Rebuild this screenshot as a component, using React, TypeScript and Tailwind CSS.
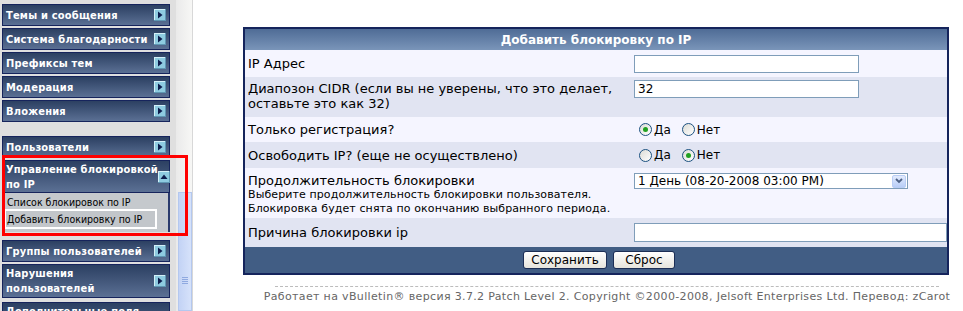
import type { ReactNode } from "react";

const SANS = "font-['DejaVu_Sans',Verdana,sans-serif]";
const COND = "font-['DejaVu_Sans_Condensed','DejaVu_Sans',Tahoma,sans-serif]";

function Arrow({ up }: { up?: boolean }) {
  return (
    <svg width="12" height="12" viewBox="0 0 12 12" className="shrink-0">
      <rect x="0" y="0" width="12" height="12" fill="#5f97b3" />
      <rect x="0" y="0" width="11" height="11" fill="#d3f0f8" />
      <rect x="1" y="1" width="10" height="10" fill="#8ecbe0" />
      {up ? (
        <path d="M2.5 8 L6 3.5 L9.5 8 Z" fill="#0d1d4d" />
      ) : (
        <path d="M4 2.5 L8.5 6 L4 9.5 Z" fill="#0d1d4d" />
      )}
    </svg>
  );
}

function NavItem({
  children,
  up,
  h = "h-[22px]",
  className = "",
}: {
  children: ReactNode;
  up?: boolean;
  h?: string;
  className?: string;
}) {
  return (
    <div
      className={`${h} ${className} flex w-[168px] shrink-0 items-center justify-between border border-[#16245c] bg-gradient-to-b from-[#2c4062] to-[#5b7094] pl-[3px] pr-[3px] text-[11px] font-bold leading-[15px] tracking-[0.2px] text-white ${COND}`}
    >
      <span className="whitespace-nowrap">{children}</span>
      <Arrow up={up} />
    </div>
  );
}

function Radio({ checked }: { checked?: boolean }) {
  return (
    <span className="flex h-[13px] w-[13px] items-center justify-center rounded-full border border-[#1c5180] bg-gradient-to-br from-[#dcdcd6] to-white">
      {checked && <span className="h-[5px] w-[5px] rounded-full bg-[#21a121]" />}
    </span>
  );
}

function Row({
  bg,
  h,
  top,
  label,
  children,
}: {
  bg: string;
  h: string;
  top?: boolean;
  label: ReactNode;
  children: ReactNode;
}) {
  return (
    <div
      className={`grid grid-cols-[387px_1fr] ${bg} ${h} ${top ? "items-start" : "items-center"}`}
    >
      <div className={`pl-[3px] text-[13px] leading-[15px] text-black ${top ? "pt-[4px]" : ""}`}>
        {label}
      </div>
      <div className={`pl-[2px] ${top ? "pt-[3px]" : ""}`}>{children}</div>
    </div>
  );
}

const inputCls = "block h-[18px] border border-[#7f9db9] bg-white px-[3px] text-[12px] leading-[16px]";

export default function App() {
  return (
    <div className={`relative flex h-[311px] w-[963px] overflow-hidden bg-white ${SANS}`}>
      {/* Боковое меню */}
      <div className="flex w-[176px] flex-col gap-[2px] bg-[#dfdfdf] pl-[2px] pt-[4px]">
        <NavItem>Темы и сообщения</NavItem>
        <NavItem>Система благодарности</NavItem>
        <NavItem>Префиксы тем</NavItem>
        <NavItem>Модерация</NavItem>
        <NavItem>Вложения</NavItem>
        <NavItem className="mt-[12px]">Пользователи</NavItem>
        <div className="shrink-0">
          <NavItem up h="h-[33px]">
            Управление блокировкой
            <br />
            по IP
          </NavItem>
          <div className={`w-[168px] border-r-2 border-[#2a3a6c] bg-[#c5c9cd] pb-[3px] pl-[2px] pt-[2px] text-[10.5px] text-black ${COND}`}>
            <div className="h-[14px] whitespace-nowrap pl-[3px] leading-[14px]">Список блокировок по IP</div>
            <div className="w-[153px] whitespace-nowrap border-2 border-white bg-[#c2c6ca] pl-[1px] leading-[16px]">
              Добавить блокировку по IP
            </div>
          </div>
        </div>
        <NavItem className="mt-[6px]">Группы пользователей</NavItem>
        <NavItem h="h-[34px]">
          Нарушения
          <br />
          пользователей
        </NavItem>
        <NavItem h="h-[34px]" className="mt-[2px]">
          Дополнительные поля
          <br />
          пользователей
        </NavItem>
      </div>

      {/* Полоса прокрутки */}
      <div className="flex w-[17px] flex-col border-r border-[#d8d8d8] bg-gradient-to-r from-[#eaeaea] to-[#f7f7f5]">
        <div className="h-[192px] shrink-0" />
        <div className="ml-[2px] flex flex-1 flex-col items-center border border-[#b4c8ef] bg-gradient-to-r from-[#c3d3f5] to-[#d6e2fa] pt-[84px]">
          <div className="flex flex-col gap-[1px]">
            <div className="h-[1px] w-[6px] bg-[#8fa9e0]" />
            <div className="h-[1px] w-[6px] bg-[#8fa9e0]" />
            <div className="h-[1px] w-[6px] bg-[#8fa9e0]" />
            <div className="h-[1px] w-[6px] bg-[#8fa9e0]" />
          </div>
        </div>
      </div>

      {/* Основная область */}
      <div className="flex-1 pl-[50px] pt-[27px]">
        <div className="w-[706px] border-2 border-[#15245c]">
          <div className="flex h-[21px] items-center justify-center bg-gradient-to-b from-[#4f6c96] to-[#7a95b9] text-[12px] font-bold text-white">
            Добавить блокировку по IP
          </div>
          <Row bg="bg-[#f5f5ff]" h="h-[27px]" label="IP Адрес">
            <div className={`${inputCls} w-[225px]`} />
          </Row>
          <Row
            bg="bg-[#e1e4f2]"
            h="h-[40px]"
            top
            label={
              <>
                Диапозон CIDR (если вы не уверены, что это делает,
                <br />
                оставьте это как 32)
              </>
            }
          >
            <div className={`${inputCls} w-[225px]`}>32</div>
          </Row>
          <Row bg="bg-[#f5f5ff]" h="h-[25px]" label="Только регистрация?">
            <div className="flex items-center pl-[5px] text-[12px]">
              <Radio checked />
              <span className="ml-[2px]">Да</span>
              <span className="ml-[11px]" />
              <Radio />
              <span className="ml-[2px]">Нет</span>
            </div>
          </Row>
          <Row bg="bg-[#e1e4f2]" h="h-[26px]" label="Освободить IP? (еще не осуществлено)">
            <div className="flex items-center pl-[5px] text-[12px]">
              <Radio />
              <span className="ml-[2px]">Да</span>
              <span className="ml-[11px]" />
              <Radio checked />
              <span className="ml-[2px]">Нет</span>
            </div>
          </Row>
          <div className="grid h-[50px] grid-cols-[387px_1fr] items-start bg-[#f5f5ff]">
            <div className="pl-[3px] pt-[5px] text-black">
              <div className="text-[13px] leading-[15px]">Продолжительность блокировки</div>
              <div className="text-[11px] leading-[14px] tracking-[0.1px]">
                Выберите продолжительность блокировки пользователя.
                <br />
                Блокировка будет снята по окончанию выбранного периода.
              </div>
            </div>
            <div className="pl-[2px] pt-[5px]">
              <div className="flex h-[16px] w-[274px] items-center justify-between border border-[#7f9db9] bg-white pl-[3px] pr-[1px] text-[12px]">
                <span>1 День (08-20-2008 03:00 PM)</span>
                <span className="flex h-[13px] w-[14px] items-center justify-center rounded-[2px] border border-[#b9cdf5] bg-gradient-to-b from-[#e3ebfd] to-[#b8cdf7]">
                  <svg width="8" height="6" viewBox="0 0 8 6">
                    <path d="M1 1 L4 4 L7 1" stroke="#4d6185" strokeWidth="1.8" fill="none" />
                  </svg>
                </span>
              </div>
            </div>
          </div>
          <Row bg="bg-[#e1e4f2]" h="h-[29px]" label="Причина блокировки ip">
            <div className={`${inputCls} h-[19px] w-[313px]`} />
          </Row>
          <div className="flex h-[26px] items-center justify-center gap-[6px] bg-[#415d84] pl-[6px]">
            <button className="h-[18px] w-[84px] rounded-[3px] border border-[#1c2e55] bg-gradient-to-b from-white to-[#e6e4dc] text-[12px] leading-[14px] text-black">
              Сохранить
            </button>
            <button className="h-[18px] w-[62px] rounded-[3px] border border-[#1c2e55] bg-gradient-to-b from-white to-[#e6e4dc] text-[12px] leading-[14px] text-black">
              Сброс
            </button>
          </div>
        </div>

        <div className="ml-[19px] mt-[11px] w-[690px]">
          <div className="mx-[13px] border-t border-dashed border-[#bcbcbc]" />
          <div className="mt-[3px] whitespace-nowrap text-center text-[11px] leading-[14px] tracking-[0.35px] text-[#666]">
            Работает на vBulletin® версия 3.7.2 Patch Level 2. Copyright ©2000-2008, Jelsoft Enterprises Ltd. Перевод: zCarot
          </div>
        </div>
      </div>

      {/* Красная рамка поверх меню */}
      <div className="pointer-events-none absolute left-[2px] top-[155px] h-[81px] w-[186px] border-[3px] border-[#ff0000]" />
    </div>
  );
}
